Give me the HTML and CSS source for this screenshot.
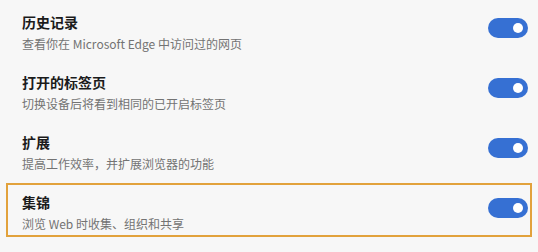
FILE: index.html
```html
<!DOCTYPE html>
<html lang="zh-CN">
<head>
    <meta charset="UTF-8">
    <meta name="viewport" content="width=device-width, initial-scale=1.0">
    <title>侧栏设置</title>
    <link rel="stylesheet" href="styles.css">
</head>
<body>
    <main class="settings-list">
        <div class="setting-row">
            <div class="setting-text">
                <div class="setting-title">历史记录</div>
                <div class="setting-desc">查看你在 Microsoft Edge 中访问过的网页</div>
            </div>
            <span class="toggle on"><span class="knob"></span></span>
        </div>

        <div class="setting-row">
            <div class="setting-text">
                <div class="setting-title">打开的标签页</div>
                <div class="setting-desc">切换设备后将看到相同的已开启标签页</div>
            </div>
            <span class="toggle on"><span class="knob"></span></span>
        </div>

        <div class="setting-row">
            <div class="setting-text">
                <div class="setting-title">扩展</div>
                <div class="setting-desc">提高工作效率，并扩展浏览器的功能</div>
            </div>
            <span class="toggle on"><span class="knob"></span></span>
        </div>

        <div class="setting-row highlighted">
            <div class="setting-text">
                <div class="setting-title">集锦</div>
                <div class="setting-desc">浏览 Web 时收集、组织和共享</div>
            </div>
            <span class="toggle on"><span class="knob"></span></span>
        </div>
    </main>
</body>
</html>
```

FILE: styles.css
```css
body {
    margin: 0;
    padding: 0;
    background-color: #f7f7f7;
    font-family: "Noto Sans CJK SC", "Noto Sans", sans-serif;
    color: #1f1f1f;
}

.settings-list {
    display: flex;
    flex-direction: column;
    gap: 6px;
    padding: 3px 6px 0;
}

.setting-row {
    display: flex;
    align-items: flex-start;
    box-sizing: border-box;
    height: 54px;
    padding: 6px 2px 0 14px;
    border: 2px solid transparent;
}

.setting-row.highlighted {
    border-color: #e2a23c;
}

.setting-text {
    flex: 1;
}

.setting-title {
    font-size: 14px;
    font-weight: bold;
    line-height: 22px;
    color: #1b1b1b;
}

.setting-desc {
    font-size: 12px;
    line-height: 20px;
    margin-top: 1px;
    color: #737373;
}

.toggle {
    position: relative;
    display: block;
    width: 40px;
    height: 20px;
    margin-top: 7px;
    border-radius: 10px;
    background-color: #ccc;
}

.toggle.on {
    background-color: #3670d3;
}

.toggle .knob {
    position: absolute;
    top: 5px;
    left: 5px;
    width: 10px;
    height: 10px;
    border-radius: 50%;
    background-color: #fff;
}

.toggle.on .knob {
    left: 25px;
}
```
